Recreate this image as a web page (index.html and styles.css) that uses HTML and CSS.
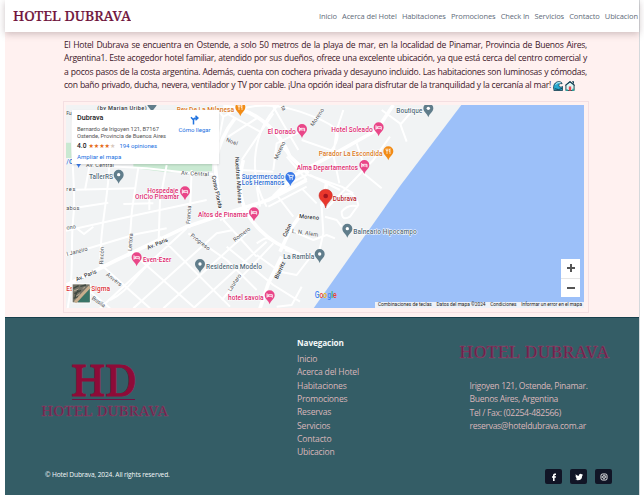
FILE: index.html
```html
<!DOCTYPE html>
<html lang="es">
<head>
<meta charset="utf-8">
<title>Hotel Dubrava</title>
<link rel="stylesheet" href="styles.css">
</head>
<body>
<div class="page">
  <header class="header">
    <svg class="brand" viewBox="0 0 118 18" role="img" aria-label="Hotel Dubrava"><text x="0" y="14" textLength="118" lengthAdjust="spacingAndGlyphs">HOTEL DUBRAVA</text></svg>
    <nav class="nav"><a>Inicio</a><a>Acerca del Hotel</a><a>Habitaciones</a><a>Promociones</a><a>Check In</a><a>Servicios</a><a>Contacto</a><a>Ubicacion</a></nav>
  </header>
  <main class="main">
    <div class="intro">
      <p>El Hotel Dubrava se encuentra en Ostende, a solo 50 metros de la playa de mar, en la localidad de Pinamar, Provincia de Buenos Aires,</p>
      <p>Argentina1. Este acogedor hotel familiar, atendido por sus dueños, ofrece una excelente ubicación, ya que está cerca del centro comercial y</p>
      <p>a pocos pasos de la costa argentina. Además, cuenta con cochera privada y desayuno incluido. Las habitaciones son luminosas y cómodas,</p>
      <p class="last"><span>con baño privado, ducha, nevera, ventilador y TV por cable. ¡Una opción ideal para disfrutar de la tranquilidad y la cercanía al mar!</span>
        <svg class="emoji" viewBox="0 0 11 11"><path d="M1 9.500C-.5 5 2.500.5 6.500.7c2 0 3.500 1 3.500 2.300-2-.6-3.500.2-3.500 2C6.500 7 9 7 10.500 6v4.500H1z" fill="#29a9d0" stroke="#173c4c" stroke-width=".9"/><path d="M3 4C4 2 6 1.400 8.500 2" fill="none" stroke="#e8ffff"/><path d="M2 8.500q4 2 8-.3" fill="none" stroke="#123749"/></svg>
        <svg class="emoji" viewBox="0 0 11 11"><path d="M1 4.500 5.500.8 10 4.500v6H1z" fill="#def7f4" stroke="#173746"/><path d="M.3 4.800 5.500.8l5.200 4M7.800.8h1.500v2" fill="none" stroke="#184255" stroke-width="1.200"/><path d="M4.200 6h2.600v4.500H4.200z" fill="#e94b55"/><path d="M1 9h2v2H1zM8 8.500h2V11H8z" fill="#29a9a1"/></svg>
      </p>
    </div>
    <section class="map-frame">
      <div class="map">
        <svg class="map-art" viewBox="18 15 1554 609" preserveAspectRatio="none">
          <defs>
            <path id="drop" d="M0 0C-3-12-15-15-15-27a15 15 0 0 1 30 0C15-15 3-12 0 0z"/>
            <g id="hotel"><use href="#drop" fill="#e94688"/><path d="M-8-33v13m0-4H8v4m0-4v-5H-3v5" fill="none" stroke="#fff" stroke-width="2.500"/><circle cx="-5" cy="-28" r="2" fill="#fff"/></g>
            <g id="place"><use href="#drop" fill="#607d8b"/><circle cy="-27" r="5" fill="#fff"/></g>
            <g id="food"><use href="#drop" fill="#f28b15"/><path d="M-4-35v16M-7-35v5q3 4 6 0v-5M5-19v-16q-4 4-2 9h2" fill="none" stroke="#fff" stroke-width="2"/></g>
            <g id="shop"><use href="#drop" fill="#3979e8"/><path d="M-9-34h4l3 9h8l3-7H-4" fill="none" stroke="#fff" stroke-width="2.500"/><circle cx="-1" cy="-21" r="2" fill="#fff"/><circle cx="6" cy="-21" r="2" fill="#fff"/></g>
          </defs>
          <path class="land" d="M0 0H1600V640H0z"/>
          <path class="park" d="M0 128H40V174H0zM220 190H456V214L320 217 220 204z"/>
          <path class="sea" d="M1204 15H1600V640H750L1020 258z"/>
          <g class="roads">
            <path d="M40 30C25 130 50 260 40 350S45 520 20 640"/>
            <path d="M90 190 75 270M147 203C145 300 115 400 122 500M235 202 216 330 205 470M320 195 300 300 296 420M395 210 388 385"/>
            <path d="M80 195 260 205 370 217 460 222M18 270 225 265M18 328 145 308M18 392 230 345 440 300M18 465 230 402 320 385M190 312 280 310M268 280V330M50 385 72 402 100 380"/>
            <path d="M130 500 270 625M230 470 400 620M300 410 510 620M385 400 500 480 590 570M490 360 545 420 590 470M85 570 150 625M150 600C210 570 220 530 290 470M120 625 380 385M220 625 470 400 520 390M310 625 560 400M400 625 620 425M485 600 545 530 640 430"/>
            <path d="M460 15 490 50 470 150 465 230 480 330M500 40 600 95M490 50C540 20 620 0 720 35S860 90 815 150M545 180 640 40M505 110 590 55M640 20 680 90 715 150M725 120 825 155M850 30 830 90 820 165 838 250M965 30 1020 70 1040 125M1020 75 1050 40M890 130 910 190M660 135 745 225 845 260 880 280M750 225 840 270"/>
            <path d="M655 15C580 90 560 220 620 320M540 210 640 215M640 210 650 130 720 95M680 170 740 240M600 320 590 260M625 320 740 260M650 285 700 350M740 225 690 250 650 290M725 265 770 310M800 325 940 180 990 110M910 220 965 265M850 285Q885 270 895 315L870 350Q845 365 845 335 865 310 895 320"/>
            <path d="M590 320 480 360M590 430C620 410 620 410 650 430M590 465 660 515 710 525 760 460M500 440 640 555 720 605M650 620 695 615 725 560M785 320 790 400 775 465M795 350 830 360 845 380M690 390 760 420 800 405 825 415M675 450 755 475"/>
          </g>
          <g class="roads wide"><path d="M20 555 170 480 380 380 500 340 625 300 740 240"/><path d="M490 20C560 20 650 70 690 170L745 220"/><path d="M525 55Q480 110 465 190L480 330"/><path d="M550 180C525 280 550 340 600 390S680 440 720 465"/><path d="M1000 15 950 90 835 155 705 225 640 290"/><path d="M725 340 690 390 660 455M665 470 625 550 600 625M785 320 800 250"/></g>
          <g class="streets">
            <text x="112" y="31" textLength="148" class="b">(by Marian Uribe)</text><text x="19" y="45" textLength="16">Fu</text>
            <text x="78" y="202" textLength="84">Av. Central</text><text x="363" y="224" textLength="84" transform="rotate(3 363 224)">Av. Central</text>
            <text x="19" y="274" textLength="27">res</text><text x="19" y="331" textLength="39">abos</text><text x="20" y="389" textLength="28" transform="rotate(-8 20 389)">ono</text><text x="22" y="468" textLength="64" transform="rotate(-15 22 468)">l Janeiro</text>
            <text x="264" y="449" textLength="66" transform="rotate(-23 264 449)" class="b">Av. Paris</text><text x="50" y="544" textLength="66" transform="rotate(-23 50 544)" class="b">Av. Paris</text>
            <text x="130" y="493" textLength="52" transform="rotate(-88 130 493)">Rincón</text><text x="215" y="453" textLength="53" transform="rotate(-86 215 453)">Lertora</text><text x="390" y="372" textLength="55" transform="rotate(-86 390 372)">Francia</text>
            <text x="137" y="526" textLength="55" transform="rotate(38 137 526)">Anvers</text><text x="94" y="597" textLength="46" transform="rotate(35 94 597)">Brasilia</text><text x="390" y="409" textLength="70" transform="rotate(38 390 409)">Progreso</text><text x="525" y="426" textLength="60" transform="rotate(-38 525 426)">Romero</text>
            <text x="455" y="228" textLength="100" transform="rotate(78 455 228)" class="b">Corso Florida</text><text x="525" y="171" textLength="140" transform="rotate(86 525 171)" class="b">Nuestras Malvinas</text>
            <text x="497" y="124" textLength="36" transform="rotate(20 497 124)">Noel</text><text x="760" y="80" textLength="60" transform="rotate(-57 760 80)">Moreno</text><text x="652" y="180" textLength="58" transform="rotate(-65 652 180)">Moreno</text><text x="662" y="20" transform="rotate(65 662 20)">ta</text>
            <text x="717" y="354" textLength="60" transform="rotate(5 717 354)" class="b">Moreno</text><text x="695" y="398" textLength="80" transform="rotate(9 695 398)">L. N. Alem</text><text x="678" y="412" textLength="42" transform="rotate(-65 678 412)" class="b">Colon</text><text x="653" y="538" textLength="55" transform="rotate(-65 653 538)" class="b">Biarritz</text><text x="512" y="575" textLength="58" transform="rotate(-56 512 575)">Lautaro</text>
          </g>
          <g class="labels">
            <g class="orange"><text x="350" y="35" textLength="172">Rey De La Milanesa</text><text x="776" y="168" textLength="192">Parador La Escondida</text></g>
            <g class="pink"><text x="623" y="102" textLength="84">El Dorado</text><text x="814" y="96" textLength="124">Hotel Soleado</text><text x="710" y="209" textLength="184">Alma Departamentos</text><text x="262" y="279" textLength="93">Hospedaje</text><text x="225" y="298" textLength="132">OriCio Pinamar</text><text x="414" y="352" textLength="151">Altos de Pinamar</text><text x="249" y="486" textLength="85">Even-Ezer</text><text x="504" y="601" textLength="107">hotel savoia</text></g>
            <g class="slate"><text x="1009" y="38" textLength="78">Boutique</text><text x="87" y="238" textLength="72">TallerRS</text><text x="438" y="506" textLength="168">Residencia Modelo</text><text x="670" y="477" textLength="93">La Rambla</text><text x="880" y="401" textLength="190">Balneario Hipocampo</text></g>
            <g class="blue"><text x="545" y="236" textLength="128">Supermercado</text><text x="545" y="256" textLength="128">Los Hermanos</text><text x="19" y="192">/C</text></g>
            <g class="red"><text x="19" y="572">Es</text><text x="94" y="572" textLength="56">Sigma</text></g>
            <text x="818" y="302" textLength="72" class="dark-red">Dubrava</text>
          </g>
          <use href="#place" x="276" y="37"/><use href="#food" x="541" y="49"/><use href="#hotel" x="726" y="114"/><use href="#hotel" x="956" y="109"/><use href="#place" x="1105" y="52"/><use href="#food" x="985" y="181"/><use href="#hotel" x="913" y="222"/><use href="#shop" x="691" y="258"/><use href="#hotel" x="375" y="301"/><use href="#place" x="176" y="251"/><use href="#hotel" x="582" y="364"/><use href="#hotel" x="230" y="499"/><use href="#place" x="420" y="519"/><use href="#hotel" x="629" y="613"/><use href="#place" x="779" y="489"/><use href="#place" x="862" y="413"/><use href="#shop" x="56" y="204"/>
          <path d="M797 324C795 307 777 302 777 286a20 18 0 0 1 40 0C817 302 799 307 797 324z" fill="#e9372c" stroke="#c32220" stroke-width="1.500"/><circle cx="797" cy="288" r="7" fill="#a3151e"/>
          <text x="764" y="595" class="google" textLength="66" lengthAdjust="spacingAndGlyphs"><tspan fill="#4285f4">G</tspan><tspan fill="#ea4335">o</tspan><tspan fill="#fbbc05">o</tspan><tspan fill="#4285f4">g</tspan><tspan fill="#34a853">l</tspan><tspan fill="#ea4335">e</tspan></text>
          <g><path d="M35 550h57v60H35z" fill="#fff"/><path d="M38 553h51v54H38z" fill="#747367"/><path d="M89 564v43H53l13-17z" fill="#397467"/><path d="M45 607 89 560" stroke="#c7ae8d" stroke-width="9"/><path d="m40 565 16-8m-13 24 20-10m-22 24 12-6m8-30 17-4M45 590l10-22" stroke="#3f4941" stroke-width="4"/><path d="m41 573 15-6m-8 22 12-8m8-15 7-5" stroke="#b4a994" stroke-width="3"/></g>
        </svg>
        <aside class="card">
          <div>
            <strong>Dubrava</strong>
            <svg class="address" viewBox="0 0 90 14"><text x="0" y="5.800" textLength="82">Bernardo de Irigoyen 121, B7167</text><text x="0" y="12.500" textLength="89">Ostende, Provincia de Buenos Aires</text></svg>
            <div class="rating"><b>4.0</b><span class="stars">★★★★<i>★</i></span><a>194 opiniones</a></div>
            <a class="expand">Ampliar el mapa</a>
          </div>
          <div class="directions"><svg viewBox="0 0 9 10"><path d="M3.500 9.500V5.300Q3.500 3 6 3H7M5.500.7 8 3 5.500 5.300M3.500 5 1 2.200" fill="none" stroke="#2374df" stroke-width="1.500"/></svg><a>Cómo llegar</a></div>
        </aside>
        <div class="zoom"><span class="plus"></span><span class="minus"></span></div>
        <div class="credits"><span>Combinaciones de teclas</span><span>Datos del mapa ©2024</span><span>Condiciones</span><span>Informar un error en el mapa</span></div>
      </div>
    </section>
  </main>
  <footer class="footer">
    <div class="columns">
      <svg class="logo" viewBox="0 0 130 60"><text class="initials" x="31" y="35" textLength="66" lengthAdjust="spacingAndGlyphs">HD</text><path d="M32 38.500h63" stroke="#701344"/><text class="name" x="1" y="55" textLength="127" lengthAdjust="spacingAndGlyphs">HOTEL DUBRAVA</text></svg>
      <div class="links"><h2>Navegacion</h2><a>Inicio</a><a>Acerca del Hotel</a><a>Habitaciones</a><a>Promociones</a><a>Reservas</a><a>Servicios</a><a>Contacto</a><a>Ubicacion</a></div>
      <div class="contact"><svg class="wordmark" viewBox="0 0 152 18"><text class="name large" x="1" y="15" textLength="150" lengthAdjust="spacingAndGlyphs">HOTEL DUBRAVA</text></svg>
        <address><span>Irigoyen 121, Ostende, Pinamar.</span><span>Buenos Aires, Argentina</span><span>Tel / Fax: (02254-482566)</span><span>reservas@hoteldubrava.com.ar</span></address></div>
    </div>
    <div class="bottom"><small>© Hotel Dubrava, 2024. All rights reserved.</small>
      <div class="social">
        <a><svg viewBox="0 0 8 8"><path d="M3 8V4.700H2V3.200h1V2.300Q3 .5 4.700.5H6v1.400H5.200q-.6 0-.6.700v.6H6L5.800 4.700H4.600V8z" fill="#fff"/></svg></a>
        <a><svg viewBox="0 0 8 8"><path d="M.7 1.300Q2 2.800 3.900 2.800 3.900.8 5.500.8q.7 0 1.100.5L7.700 1 7.200 2 8 1.900 7.200 2.700Q7 7.300 2.700 7.300 1.200 7.300.2 6.500 1.700 6.500 2.300 6 1.100 5.700.9 4.800H1.500Q.5 4.200.5 3.100L1.100 3.300Q.2 2.400.7 1.300z" fill="#fff"/></svg></a>
        <a><svg viewBox="0 0 8 8"><rect x="1" y="1" width="6" height="6" rx="1.500" fill="none" stroke="#fff" stroke-width=".9"/><circle cx="4" cy="4" r="1.400" fill="none" stroke="#fff" stroke-width=".9"/><circle cx="5.800" cy="2.300" r=".4" fill="#fff"/></svg></a>
      </div></div>
  </footer>
</div>
</body>
</html>
```
FILE: styles.css
```css
* { box-sizing: border-box; }
body { margin: 0; height: 500px; overflow: hidden; background: #fff; font-family: "Open Sans", "Noto Sans", sans-serif; }
.page { width: 635px; height: 495px; margin-left: 5px; display: flex; flex-direction: column; background: #fff1f0; border-right: 1px solid #d5d9dc; }
.header { height: 32px; flex: none; display: flex; justify-content: space-between; align-items: flex-start; background: #fff; padding: 7px 1px 0 8px; box-shadow: 0 2px 7px #8a777a70; position: relative; z-index: 1; }
.brand { width: 118px; height: 18px; }
.brand text { font: 500 15px "Noto Serif", "DejaVu Serif", "Liberation Serif", serif; fill: #70143d; stroke: #70143d; stroke-width: .2px; }
.nav { width: 319px; display: flex; justify-content: space-between; padding-top: 4px; font-size: 7.500px; line-height: 11px; letter-spacing: -.13px; color: #616b7a; white-space: nowrap; }
.main { flex: none; height: 285px; }
.intro { width: 523px; margin-left: 59px; padding-top: 7px; color: #3d1729; font-size: 8.600px; letter-spacing: -.28px; line-height: 13.330px; }
.intro p { margin: 0; height: 13.330px; white-space: nowrap; text-align-last: justify; }
.intro .last { width: 511px; display: flex; align-items: center; }
.last span { flex: 1; min-width: 0; }
.emoji { width: 10px; height: 10px; margin-left: 2px; flex: none; }
.map-frame { width: 526px; height: 212px; margin: 8.700px 0 0 58px; padding: 3px 5px 5px 2px; border: 1px solid #f4dfe2; }
.map { width: 518px; height: 203px; position: relative; overflow: hidden; }
.map-art { width: 518px; height: 203px; display: block; font-family: Roboto, sans-serif; }
.land { fill: #f1f3f4; }
.park { fill: #c9e9d2; }
.sea { fill: #9cc0f9; }
.roads { fill: none; stroke: #fff; stroke-width: 6; stroke-linejoin: round; }
.roads.wide { stroke-width: 11; }
.streets { font-size: 17px; fill: #474b50; stroke: #fff; stroke-width: 2px; paint-order: stroke; }
.b { font-weight: 500; fill: #303439; }
.labels { font-size: 20px; font-weight: 500; stroke: #fff; stroke-width: 3px; paint-order: stroke; }
.orange { fill: #d9781c; }
.pink { fill: #dc286f; }
.slate { fill: #526b7a; }
.blue { fill: #286ad2; }
.red { fill: #db3037; }
.dark-red { fill: #b52228; }
.google { font: 500 25px Roboto, sans-serif; }
.card { position: absolute; left: 6px; top: 5px; width: 147px; height: 54px; padding: 3px 9px 0 5px; background: #fff; display: flex; justify-content: space-between; font: 6px/8px Roboto, sans-serif; color: #555; box-shadow: 0 1px 2px #0002; }
.card strong { display: block; font-size: 7.200px; font-weight: 500; line-height: 10px; color: #222; }
.card a { color: #1a70df; white-space: nowrap; }
.address { display: block; width: 90px; height: 14px; margin-top: 2px; font: 5.800px Roboto, sans-serif; fill: #555; }
.rating { display: flex; align-items: center; height: 13px; }
.rating b { font-weight: 500; font-size: 6.700px; color: #222; }
.stars { color: #e66b18; font: 6px/8px "DejaVu Sans", sans-serif; margin: 0 4px 0 2px; }
.stars i { color: #d8c8bc; font-style: normal; }
.expand { display: block; line-height: 10px; font-size: 6.100px; }
.directions { width: 31px; display: flex; flex-direction: column; align-items: center; padding-top: 2px; }
.directions svg { width: 9px; height: 10px; margin-bottom: 1px; }
.zoom { position: absolute; right: 4px; bottom: 11px; width: 19px; height: 38px; background: #fff; display: flex; flex-direction: column; }
.zoom span { flex: 1; display: grid; place-items: center; }
.plus { border-bottom: 1px solid #e6e6e6; }
.plus::before, .minus::before { content: ""; grid-area: 1 / 1; width: 8px; height: 2px; background: #555; }
.plus::after { content: ""; grid-area: 1 / 1; width: 2px; height: 8px; background: #555; }
.credits { position: absolute; right: 0; bottom: 0; width: 209px; height: 6px; display: flex; justify-content: space-between; padding: 0 2px 0 3px; background: #edf1f8; font: 4.800px/6px Roboto, sans-serif; color: #222; white-space: nowrap; }
.footer { height: 178px; flex: none; background: #345d66; border-top: 1px solid #163f4c; color: #f3f8f8; }
.columns { height: 149px; display: grid; grid-template-columns: 257px 161px 1fr; padding-left: 35px; }
.logo { width: 130px; height: 60px; margin-top: 43px; }
.initials { font: 500 43px "Noto Serif", "DejaVu Serif", "Liberation Serif", serif; fill: #8e0b38; stroke: #8e0b38; stroke-width: .8px; }
.name { font: 500 15px "Noto Serif", "DejaVu Serif", "Liberation Serif", serif; fill: #701d49; stroke: #85506f; stroke-width: .4px; }
.large { font-size: 17px; }
.links { padding-top: 18px; font-size: 8.600px; line-height: 13.350px; color: #d9b6ba; letter-spacing: -.2px; }
.links h2 { margin: 0 0 3px; font-size: 8.200px; line-height: 14px; color: #f3f8f8; letter-spacing: -.1px; }
.links a { display: block; }
.wordmark { width: 152px; height: 18px; display: block; margin-top: 25px; }
.contact address { margin: 19px 0 0 11.500px; color: #d9b6ba; font-style: normal; font-size: 8.600px; line-height: 13.350px; letter-spacing: -.32px; white-space: nowrap; }
.contact span { display: block; }
.bottom { display: flex; justify-content: space-between; align-items: center; height: 19px; padding: 0 27px 0 40px; }
.bottom small { font-size: 6.600px; line-height: 10px; letter-spacing: -.14px; margin-top: -3px; }
.social { display: flex; gap: 8px; }
.social a { width: 17px; height: 15px; border-radius: 2px; background: #111526; display: grid; place-items: center; }
.social svg { width: 8px; height: 8px; }
```
